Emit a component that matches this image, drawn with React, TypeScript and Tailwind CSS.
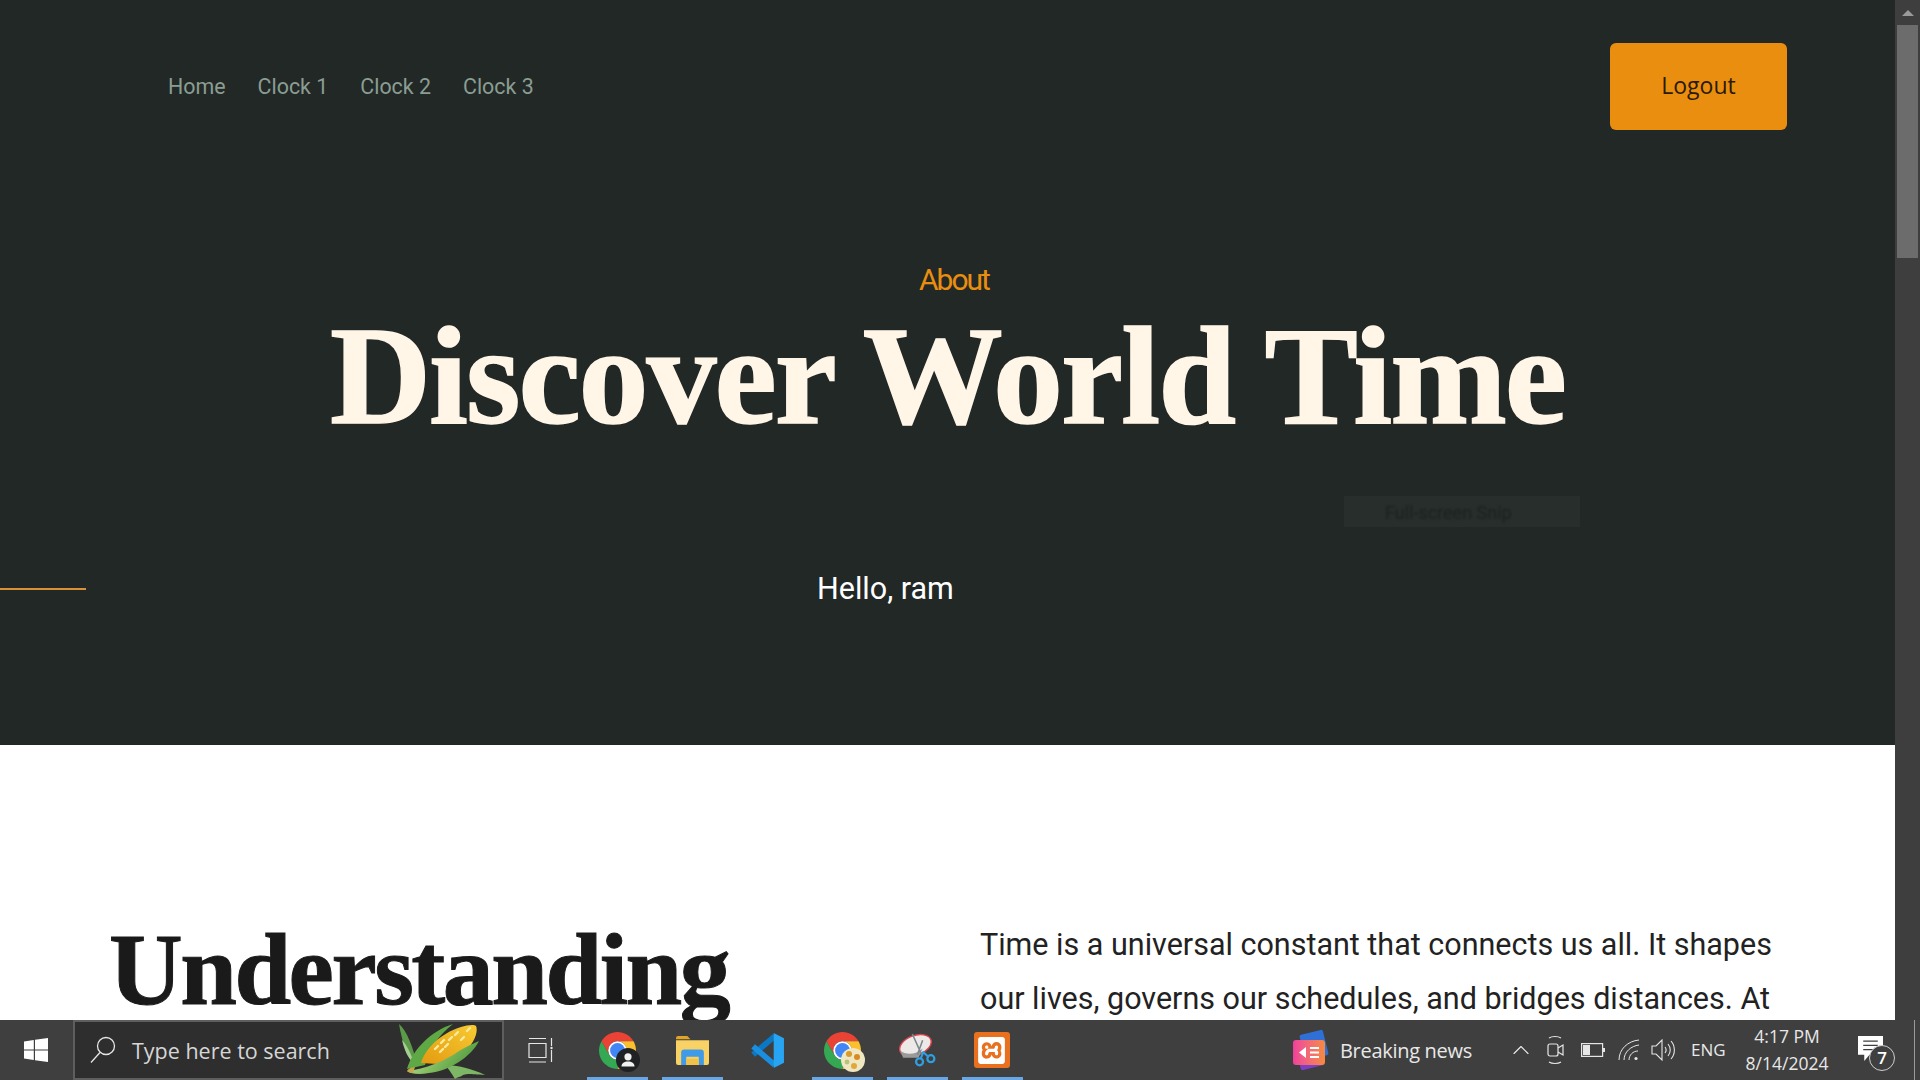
import { ChevronUp } from "lucide-react";
import { SiXampp } from "react-icons/si";

const navLinks = ["Home", "Clock 1", "Clock 2", "Clock 3"];

function Chrome({ badge }: { badge: "profile" | "globe" }) {
  return (
    <div className="relative w-[37px] h-[37px]">
      <svg viewBox="4 4 40 40" className="w-full h-full">
        <path d="M6.68 14 15.34 29A10 10 0 0 1 24 14H41.32A20 20 0 0 0 6.68 14Z" fill="#ea4335" />
        <path d="M6.68 14A20 20 0 0 0 24 44L32.66 29A10 10 0 0 1 15.34 29Z" fill="#34a853" />
        <path d="M41.32 14H24A10 10 0 0 1 32.66 29L24 44A20 20 0 0 0 41.32 14Z" fill="#fbc02d" />
        <circle cx="24" cy="24" r="10" fill="#fff" />
        <circle cx="24" cy="24" r="8" fill="#4285f4" />
      </svg>
      {badge === "profile" ? (
        <svg viewBox="0 0 24 24" className="absolute right-[-4px] bottom-[-3px] w-[24px] h-[24px]">
          <circle cx="12" cy="12" r="12" fill="#202124" />
          <circle cx="12" cy="8.8" r="3.6" fill="#f1f1f1" />
          <path d="M5.5 18.5c0-3.4 2.8-5 6.5-5s6.500 1.600 6.500 5z" fill="#f1f1f1" />
        </svg>
      ) : (
        <svg viewBox="0 0 24 24" className="absolute right-[-4px] bottom-[-3px] w-[24px] h-[24px]">
          <circle cx="12" cy="12" r="12" fill="#efe6c2" />
          <circle cx="8" cy="6" r="3" fill="#d99b2b" />
          <circle cx="16" cy="9" r="3" fill="#d98a20" />
          <circle cx="6" cy="14" r="2.4" fill="#b9c27a" />
          <circle cx="13" cy="18" r="3" fill="#dfa93a" />
        </svg>
      )}
    </div>
  );
}

function FolderIcon() {
  return (
    <svg viewBox="0 0 32 28" className="w-[33px] h-[29px]">
      <path d="M0 2a2 2 0 0 1 2-2h9l3 3H0z" fill="#e0a526" />
      <path d="M0 4h32v22a2 2 0 0 1-2 2H2a2 2 0 0 1-2-2z" fill="#f8d264" />
      <path d="M5 28V16a3 3 0 0 1 3-3h16a3 3 0 0 1 3 3v12h-5v-8H10v8z" fill="#3f9be8" />
      <rect x="10" y="22" width="12" height="6" fill="#f1c24a" />
    </svg>
  );
}

function VsCodeIcon() {
  return (
    <svg viewBox="0 0 36 36" className="w-[37px] h-[37px] mr-[3px]">
      <path d="M26 4 5 22" stroke="#0a78c4" strokeWidth="5.5" fill="none" />
      <path d="M26 32 5 14" stroke="#1a8fe0" strokeWidth="5.5" fill="none" />
      <path d="M25 1 35 6v24l-10 5z" fill="#28a5f2" />
    </svg>
  );
}

function SnipIcon() {
  return (
    <svg viewBox="0 0 36 36" className="w-[37px] h-[37px]">
      <ellipse cx="16" cy="13" rx="16" ry="9.500" transform="rotate(-20 16 13)" fill="#ece9e6" stroke="#d8454f" strokeWidth="1.4" />
      <path d="M1 18c6 5 16 4 22-2l-4 9H4z" fill="#9a9a9a" />
      <path d="M13 2 22 22M23 8l-5 14" stroke="#7b8790" strokeWidth="1.500" />
      <circle cx="20" cy="29" r="3.400" fill="none" stroke="#2f9fe0" strokeWidth="2.200" />
      <circle cx="31" cy="26" r="3.400" fill="none" stroke="#2f9fe0" strokeWidth="2.200" />
      <path d="M21 26 24 19M28.500 24 23 19" stroke="#2f9fe0" strokeWidth="2" />
    </svg>
  );
}

function XamppIcon() {
  return (
    <div className="w-[36px] h-[36px] mr-[2px] rounded-[3px] bg-[#e8701f] flex items-center justify-center">
      <SiXampp className="text-white w-[27px] h-[27px]" />
    </div>
  );
}

function CornIcon() {
  return (
    <svg viewBox="0 0 88 60" className="w-[88px] h-[60px]">
      <defs>
        <linearGradient id="cob" x1="0" y1="1" x2="1" y2="0">
          <stop offset="0" stopColor="#e39a10" />
          <stop offset="1" stopColor="#f7cb32" />
        </linearGradient>
        <linearGradient id="husk" x1="0" y1="0" x2="1" y2="0.4">
          <stop offset="0" stopColor="#e3efc4" />
          <stop offset="0.5" stopColor="#8cc266" />
          <stop offset="1" stopColor="#4f9a3c" />
        </linearGradient>
      </defs>
      <path d="M0 5C8 12 14 28 18 46 8 40 3 22 0 5z" fill="#5c9a4a" />
      <path d="M3 21c5 5 9 14 13 25C9 40 5 30 3 21z" fill="#a5cf91" />
      <path d="M8 50C14 30 32 12 54 5 40 16 30 30 26 46z" fill="#5ea845" />
      <path d="M22 44C26 30 42 14 62 8c6-2 13-3 15-1 2 4 0 14-8 22-8 8-20 14-30 16z" fill="url(#cob)" />
      <path d="M36 30l3-3M41 33l3-3M46 28l3-3M42 24l3-3M50 21l3-3M56 16l3-3M62 21l3-3M68 12l3-3" stroke="#fde99b" strokeWidth="2.400" strokeLinecap="round" />
      <path d="M46 46c12 0 28 4 40 10-12 0-16-2-22 0-2 2-6 2-8 4-4-6-6-10-10-14z" fill="#7db765" />
      <path d="M8 52C26 50 46 42 60 32 70 26 76 24 80 22 72 38 50 52 30 54 20 56 12 55 8 52z" fill="url(#husk)" />
      <path d="M8 52c2-3 5-4 8-4l-2 6c-3 0-5-1-6-2z" fill="#c4a94a" />
    </svg>
  );
}

function NewsIcon() {
  return (
    <div className="relative w-[36px] h-[36px]">
      <div className="absolute left-[9px] top-0 w-[24px] h-[26px] bg-[#2f6fd6] rotate-[-14deg] rounded-[2px]" />
      <div className="absolute left-[5px] bottom-0 w-[24px] h-[24px] bg-[#7b3fc4] rotate-[-14deg] rounded-[2px]" />
      <div className="absolute left-0 top-[8px] w-[32px] h-[25px] rounded-[3px] bg-gradient-to-r from-[#ef3f9a] to-[#f58a3a]">
        <svg viewBox="0 0 32 25" className="w-full h-full">
          <path d="M6 12.500 13 7v11z" fill="#fff" />
          <path d="M17 8h9M17 12.500h9M17 17h9" stroke="#fff" strokeWidth="1.800" />
        </svg>
      </div>
    </div>
  );
}

function TaskIcon({ children, open }: { children: React.ReactNode; open?: boolean }) {
  return (
    <div className="relative w-[75px] h-full flex items-center justify-center">
      {children}
      {open && <div className="absolute bottom-0 left-[7px] right-[7px] h-[3px] bg-[#69a6e6]" />}
    </div>
  );
}

function Taskbar() {
  return (
    <footer className="h-[60px] shrink-0 bg-[#3f3f3f] flex items-center text-[#e8e8e8] [font-family:'Open_Sans',sans-serif]">
      <div className="w-[73px] flex justify-center pr-[2px]">
        <svg viewBox="0 0 24 24" className="w-[24px] h-[24px] fill-white">
          <path d="M0 3.400 9.800 2v9.500H0zM11 1.800 24 0v11.500H11zM0 12.500h9.800V22L0 20.600zM11 12.500h13V24l-13-1.800z" />
        </svg>
      </div>
      <div className="relative w-[431px] h-full border-2 border-[#5e5e5e] bg-[#2e2e2e] flex items-center pl-[15px]">
        <svg viewBox="0 0 26 28" className="w-[26px] h-[28px]" fill="none" stroke="#e6e6e6" strokeWidth="1.300">
          <circle cx="16" cy="10" r="8.500" />
          <path d="M10 16.500 1 26.500" />
        </svg>
        <span className="ml-[16px] pt-[2px] text-[21.500px] text-[#d6d6d6]">Type here to search</span>
        <div className="absolute right-[15px] -top-[3px]">
          <CornIcon />
        </div>
      </div>
      <div className="w-[1px]" />
      <TaskIcon>
        <svg viewBox="0 0 26 26" className="w-[26px] h-[26px] mr-[4px]" fill="none" stroke="#e6e6e6" strokeWidth="1.200">
          <path d="M1 1.500h17M1 25h17M1 6.500h17v14H1zM23.500 1v8M23.500 13v12" />
          <circle cx="23.500" cy="11" r="1.200" fill="#e6e6e6" stroke="none" />
        </svg>
      </TaskIcon>
      <TaskIcon open>
        <Chrome badge="profile" />
      </TaskIcon>
      <TaskIcon open>
        <FolderIcon />
      </TaskIcon>
      <TaskIcon>
        <VsCodeIcon />
      </TaskIcon>
      <TaskIcon open>
        <Chrome badge="globe" />
      </TaskIcon>
      <TaskIcon open>
        <SnipIcon />
      </TaskIcon>
      <TaskIcon open>
        <XamppIcon />
      </TaskIcon>
      <div className="ml-auto flex items-center h-full">
        <NewsIcon />
        <span className="ml-[11px] pt-[2px] w-[167px] text-[20px] tracking-[-0.3px]">Breaking news</span>
        <ChevronUp className="w-[28px] h-[28px]" strokeWidth={1} />
        <div className="ml-[3px] w-[36px] flex justify-center">
          <svg viewBox="0 0 20 30" className="w-[20px] h-[30px]" fill="none" stroke="#e6e6e6" strokeWidth="1.200">
            <path d="M3 3c3-2 9-2 12 0M3 27c3 2 9 2 12 0" />
            <rect x="2" y="9" width="10" height="12" rx="2" />
            <path d="M12 13l5-3v10l-5-3" />
          </svg>
        </div>
        <div className="w-[37px] flex justify-center">
          <svg viewBox="0 0 24 14" className="w-[24px] h-[14px]" fill="none" stroke="#e6e6e6" strokeWidth="1.200">
            <rect x="0.600" y="0.600" width="21" height="12.800" />
            <rect x="2" y="2" width="7" height="10" fill="#e6e6e6" stroke="none" />
            <rect x="22" y="5" width="2" height="4" fill="#e6e6e6" stroke="none" />
          </svg>
        </div>
        <div className="w-[36px] flex justify-center">
          <svg viewBox="0 0 22 22" className="w-[22px] h-[22px]" fill="none" stroke="#e6e6e6" strokeWidth="1">
            <path d="M1 21C1 10 10 2 21 1M6 21c0-8 7-14 15-15M11 21c0-5 4-9 9-9" />
            <circle cx="18" cy="19.500" r="1.600" fill="#e6e6e6" stroke="none" />
          </svg>
        </div>
        <div className="w-[32px] flex justify-center">
          <svg viewBox="0 0 24 22" className="w-[24px] h-[22px]" fill="none" stroke="#e6e6e6" strokeWidth="1.100">
            <path d="M1 7h4l6-6v20l-6-6H1z" />
            <path d="M14 8c1.500 2 1.500 4 0 6M17 5c3 3.500 3 8.500 0 12M20 2c4.500 5 4.500 13 0 18" />
          </svg>
        </div>
        <span className="ml-[12px] w-[40px] text-[17px]">ENG</span>
        <div className="ml-[11px] w-[90px] flex flex-col items-center text-[17.500px] leading-[27px]">
          <span>4:17 PM</span>
          <span>8/14/2024</span>
        </div>
        <div className="relative ml-[26px] w-[62px] h-full">
          <svg viewBox="0 0 24 24" className="absolute left-0 top-[15px] w-[25px] h-[27px] fill-white">
            <path d="M0 0h24v18H11l-5 6v-6H0z" />
            <path d="M5 5h14M5 9h14M5 13h14" stroke="#3f3f3f" strokeWidth="1.200" />
          </svg>
          <span className="absolute left-[11px] top-[25px] w-[26px] h-[26px] rounded-full border border-[#cfcfcf] bg-[#3f3f3f] flex items-center justify-center text-[17px] font-semibold text-white">
            7
          </span>
          <div className="absolute right-[5px] top-0 h-full w-[1px] bg-[#9a9a9a]" />
        </div>
      </div>
    </footer>
  );
}

export default function App() {
  return (
    <div className="h-screen w-full flex flex-col overflow-hidden [font-family:'Roboto',sans-serif]">
      <div className="flex flex-1 min-h-0">
        <main className="flex-1 min-w-0 overflow-hidden">
          <section className="relative h-[745px] bg-[#222826] pt-[43px]">
            <nav className="flex items-center justify-between pl-[168px] pr-[108px]">
              <ul className="mt-[1px] flex gap-[32px] text-[21.400px] text-[#8a9d92]">
                {navLinks.map((link) => (
                  <li key={link}>{link}</li>
                ))}
              </ul>
              <button className="w-[177px] h-[87px] pb-[3px] rounded-[6px] bg-[#ea8e0f] text-[23px] text-[#2a1a06] [font-family:'Open_Sans',sans-serif]">
                Logout
              </button>
            </nav>
            <div className="mt-[131px] flex flex-col items-center">
              <p className="ml-[13px] text-[30px] leading-[38px] tracking-[-2px] text-[#ea8e0f]">About</p>
              <h1 className="mt-[7px] text-[140px] leading-[140px] font-bold tracking-[-2px] text-[#fff6e8] [-webkit-text-stroke:1.500px_#fff6e8] [font-family:'Liberation_Serif',serif]">
                Discover World Time
              </h1>
            </div>
            <div className="mt-[125px] flex items-center">
              <div className="w-[86px] h-[2px] bg-[#d9923a]" />
              <p className="ml-[731px] text-[30.500px] leading-[36px] text-white">Hello, ram</p>
            </div>
            <div className="absolute left-[1344px] top-[496px] w-[236px] h-[31px] bg-[#272e2c] flex items-center pl-[41px] pt-[2px]">
              <span className="text-[18px] text-[#1c211f] blur-[1px]">Full-screen Snip</span>
            </div>
          </section>
          <section className="bg-white flex pl-[109px] pt-[165px]">
            <h2 className="w-[871px] shrink-0 text-[102px] leading-[120px] font-bold tracking-[-2.500px] text-[#1a1a1a] [-webkit-text-stroke:1px_#1a1a1a] [font-family:'Liberation_Serif',serif]">
              Understanding
            </h2>
            <p className="w-[800px] mt-[8px] text-[30.500px] leading-[54px] text-[#222]">
              Time is a universal constant that connects us all. It shapes our lives, governs our schedules, and bridges distances. At
            </p>
          </section>
        </main>
        <aside className="w-[25px] shrink-0 bg-[#3e3e3e] flex flex-col items-center">
          <div className="h-[25px] flex items-center justify-center">
            <div className="w-0 h-0 border-x-[6px] border-x-transparent border-b-[6px] border-b-[#9a9a9a]" />
          </div>
          <div className="w-[21px] h-[233px] bg-[#6c6c6c]" />
        </aside>
      </div>
      <Taskbar />
    </div>
  );
}
